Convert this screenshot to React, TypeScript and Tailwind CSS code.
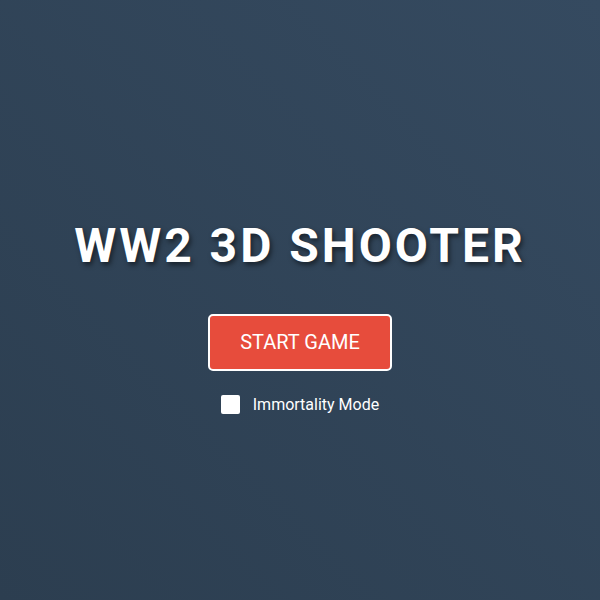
import React from "react";

export default function App() {
  return (
    <div className="w-[600px] h-[600px] bg-linear-to-tr from-[#2c3e50] to-[#354a60] flex flex-col items-center justify-center font-['Roboto',sans-serif] text-white">
      <h1 className="text-[48px] font-bold leading-[56px] tracking-[3px] [text-shadow:2px_3px_5px_rgba(0,0,0,0.5)] mt-[34px]">
        WW2 3D SHOOTER
      </h1>
      <button className="mt-[40px] bg-[#e74c3c] border-2 border-white rounded-[5px] px-[30px] py-[15px] text-[20px] leading-[23px] text-white">
        START GAME
      </button>
      <label className="mt-[22px] flex items-center gap-[13px] text-[16px]">
        <span className="w-[19px] h-[19px] bg-white rounded-[2px] block"></span>
        <span>Immortality Mode</span>
      </label>
    </div>
  );
}
